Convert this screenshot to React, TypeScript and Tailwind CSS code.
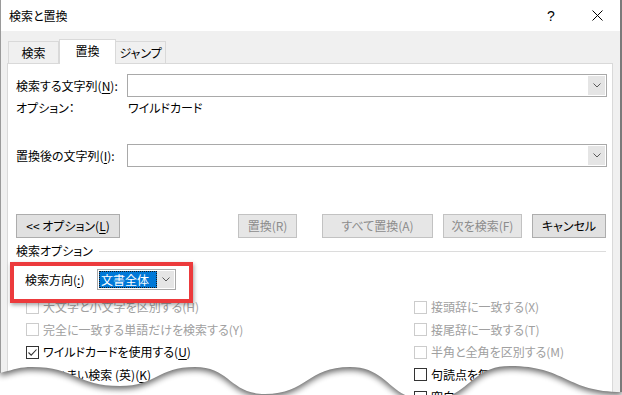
import React from "react";

const Chevron = () => (
  <svg width="8" height="5" viewBox="0 0 8 5">
    <path d="M0.5 0.5 L4 4 L7.5 0.5" fill="none" stroke="#5a5a5a" strokeWidth="1" />
  </svg>
);

const Combo = ({ className = "" }: { className?: string }) => (
  <div className={`flex border border-[#a9a9a9] bg-white ${className}`}>
    <div className="flex-1" />
    <div className="my-[1px] mr-[1px] flex w-[17px] items-center justify-center bg-[#e5e5e5]">
      <Chevron />
    </div>
  </div>
);

const Btn = ({
  children,
  disabled,
  className = "",
}: {
  children: React.ReactNode;
  disabled?: boolean;
  className?: string;
}) => (
  <div
    className={`flex h-[24px] items-center justify-center border ${
      disabled
        ? "border-[#c2c2c2] bg-[#e6e6e6] text-[#8c8c8c]"
        : "border-[#adadad] bg-[#e1e1e1] text-black"
    } ${className}`}
  >
    {children}
  </div>
);

const Check = ({
  label,
  disabled,
  checked,
}: {
  label: React.ReactNode;
  disabled?: boolean;
  checked?: boolean;
}) => (
  <div className="flex h-[22.5px] items-center">
    <div
      className={`flex h-[13px] w-[13px] items-center justify-center border bg-white ${
        disabled ? "border-[#cccccc]" : "border-[#333333]"
      }`}
    >
      {checked && (
        <svg width="11" height="11" viewBox="0 0 11 11">
          <path d="M1.5 5.5 L4.2 8.2 L9.5 2.5" fill="none" stroke="#333" strokeWidth="1.1" />
        </svg>
      )}
    </div>
    <span className={`ml-[4px] whitespace-nowrap ${disabled ? "text-[#a0a0a0]" : "text-black"}`}>
      {label}
    </span>
  </div>
);

const U = ({ children }: { children: React.ReactNode }) => (
  <span className="underline underline-offset-2">{children}</span>
);

// torn edge at the bottom
const edge =
  "M0,373 C16,369 20,367 32,367 C76,367 76,386 120,386 C157,386 157,367 195,367 C230,367 230,394 265,394 C307,394 307,367 350,367 C389,367 389,400 428,400 C469,400 469,366 510,366 C566,366 566,392 622,392";

const TornEdge = () => (
  <svg
    className="pointer-events-none absolute left-0 top-[350px]"
    width="622"
    height="45"
    viewBox="0 350 622 45"
  >
    <defs>
      <clipPath id="below">
        <path d={edge + " L622,400 L0,400 Z"} />
      </clipPath>
      <filter id="soft" x="-5%" y="-50%" width="110%" height="200%">
        <feGaussianBlur stdDeviation="3" />
      </filter>
    </defs>
    <path d={edge + " L622,400 L0,400 Z"} fill="#ffffff" />
    <g clipPath="url(#below)">
      <path
        d={edge + " L622,340 L0,340 Z"}
        fill="#000"
        opacity="0.6"
        filter="url(#soft)"
        transform="translate(0,3)"
      />
    </g>
  </svg>
);

export default function App() {
  return (
    <div className="relative h-[395px] w-[622px] overflow-hidden bg-white text-[12px] leading-none text-black font-['Noto_Sans_CJK_JP','Noto_Sans',sans-serif] [font-feature-settings:'palt']">
      <div className="flex h-full w-[622px] flex-col border-l border-r-2 border-l-[#9a9a9a] border-r-[#7a7a7a]">
        {/* title bar */}
        <div className="flex h-[31px] shrink-0 items-center bg-white">
          <span className="ml-[8px]">検索と置換</span>
          <div className="flex-1" />
          <div className="flex h-full w-[46px] items-center justify-center text-[14px] font-['Liberation_Sans',sans-serif]">
            ?
          </div>
          <div className="flex h-full w-[46px] items-center justify-center">
            <svg width="11" height="11" viewBox="0 0 11 11">
              <path d="M0.5 0.5 L10.5 10.5 M10.5 0.5 L0.5 10.5" stroke="#000" strokeWidth="1" />
            </svg>
          </div>
        </div>

        {/* body */}
        <div className="flex flex-1 flex-col bg-[#f0f0f0] pl-[6px] pr-[7px]">
          <div className="flex h-[32px] shrink-0 items-end pl-[1px]">
            <div className="flex h-[22px] w-[51px] items-center justify-center border border-b-0 border-[#d9d9d9] bg-[#f0f0f0]">
              検索
            </div>
            <div className="relative z-10 -mb-px flex h-[25px] w-[57px] items-center justify-center border border-b-0 border-[#d9d9d9] bg-white pb-[2px]">
              置換
            </div>
            <div className="flex h-[22px] w-[50px] items-center justify-center border border-b-0 border-l-0 border-[#d9d9d9] bg-[#f0f0f0]">
              ジャンプ
            </div>
          </div>

          <div className="flex flex-1 flex-col border border-[#d9d9d9] bg-white pl-[8px] pr-[5px] pt-[10px]">
            <div className="flex h-[23px] items-center">
              <span className="w-[111px] whitespace-nowrap">
                検索する文字列(<U>N</U>):
              </span>
              <Combo className="h-[23px] flex-1" />
            </div>
            <div className="flex h-[22px] items-center">
              <span className="w-[112px]">オプション：</span>
              <span>ワイルドカード</span>
            </div>
            <div className="mt-[25px] flex h-[23px] items-center">
              <span className="w-[111px] whitespace-nowrap">
                置換後の文字列(<U>I</U>):
              </span>
              <Combo className="h-[23px] flex-1" />
            </div>

            <div className="mt-[47px] flex pr-[1px]">
              <Btn className="w-[104px]">
                &lt;&lt; オプション(<U>L</U>)
              </Btn>
              <div className="flex-1" />
              <Btn disabled className="w-[59px]">
                置換(R)
              </Btn>
              <Btn disabled className="ml-[25px] w-[111px]">
                すべて置換(A)
              </Btn>
              <Btn disabled className="ml-[10px] w-[79px]">
                次を検索(F)
              </Btn>
              <Btn className="ml-[10px] w-[74px]">キャンセル</Btn>
            </div>

            <div className="mt-[6px] flex h-[14px] items-center pr-[1px]">
              <span>検索オプション</span>
              <div className="ml-[6px] h-px flex-1 bg-[#dcdcdc]" />
            </div>

            <div className="mt-[11px] flex h-[21px] items-center pl-[9px]">
              <span className="w-[72px]">
                検索方向(<U>:</U>)
              </span>
              <div className="flex h-[21px] w-[79px] border border-[#a9a9a9] bg-white p-[1px]">
                <div className="flex w-[59px] items-center bg-[#0078d7] pl-[2px] text-white outline-1 outline-dotted outline-[#1a1a1a] -outline-offset-1">
                  文書全体
                </div>
                <div className="flex-1" />
                <div className="flex w-[17px] items-center justify-center bg-[#e5e5e5]">
                  <Chevron />
                </div>
              </div>
            </div>

            <div className="mt-[6px] grid grid-cols-[388px_1fr] pl-[10px]">
              <div className="flex flex-col">
                <Check disabled label="大文字と小文字を区別する(H)" />
                <Check disabled label="完全に一致する単語だけを検索する(Y)" />
                <Check
                  checked
                  label={
                    <>
                      ワイルドカードを使用する(<U>U</U>)
                    </>
                  }
                />
                <Check
                  label={
                    <>
                      あいまい検索 (英)(<U>K</U>)
                    </>
                  }
                />
                <Check label="英単語の異なる活用形も検索する(W)" />
              </div>
              <div className="flex flex-col">
                <Check disabled label="接頭辞に一致する(X)" />
                <Check disabled label="接尾辞に一致する(T)" />
                <Check disabled label="半角と全角を区別する(M)" />
                <Check label="句読点を無視する(S)" />
                <Check label="空白文字を無視する(A)" />
              </div>
            </div>
          </div>
        </div>
      </div>

      {/* highlight frame */}
      <div className="pointer-events-none absolute left-[10px] top-[262px] h-[41px] w-[183px] border-4 border-[#ec3a3c] shadow-[1px_2px_4px_rgba(0,0,0,0.35)]" />

      <TornEdge />
    </div>
  );
}
